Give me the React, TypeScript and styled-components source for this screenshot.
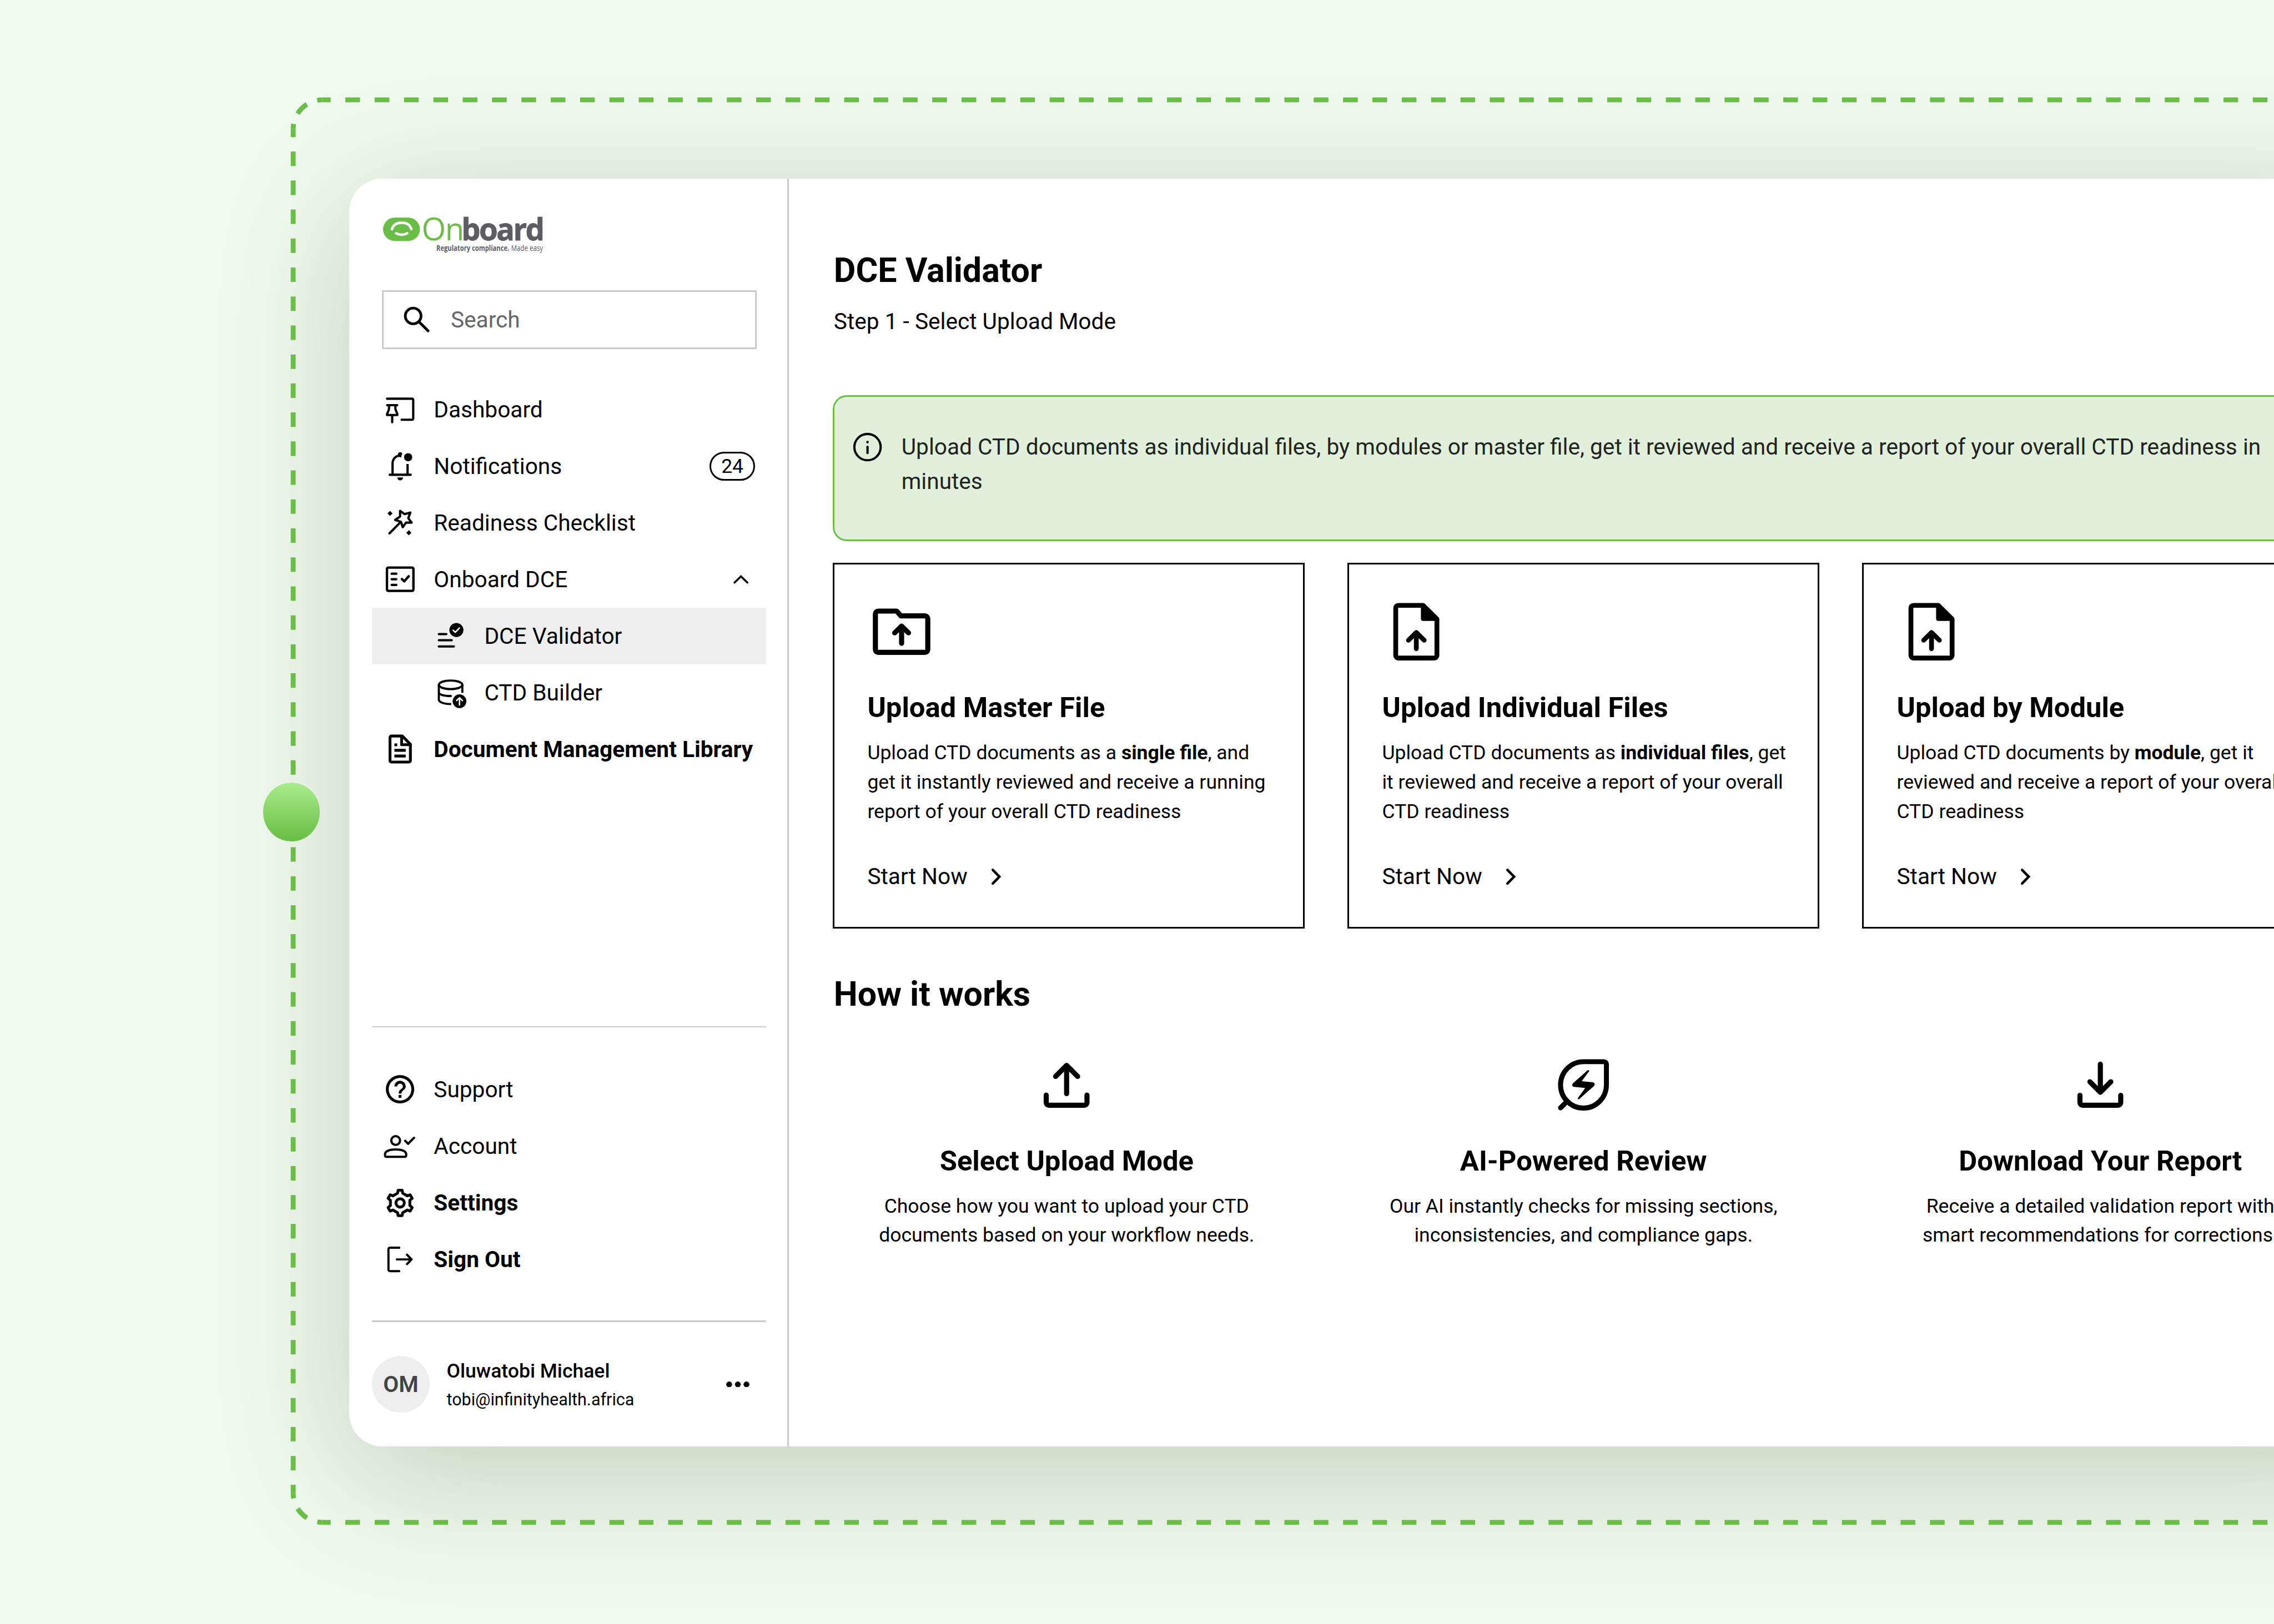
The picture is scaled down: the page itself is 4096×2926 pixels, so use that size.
import React from "react";
import styled, { createGlobalStyle } from "styled-components";
import { MdHelpOutline } from "react-icons/md";

const green = "#6abd46";
const line = "#cccccc";
const hair = "0.308rem";

/* 1rem is ten artboard units, so every length below scales from one place. */
const GlobalStyle = createGlobalStyle`
  html { font-size: 9.7524px; }
  body {
    margin: 0;
    overflow: hidden;
    background: #f0f9ee;
    font-family: Roboto, "Liberation Sans", sans-serif;
    color: #000;
  }
  *, *::before, *::after { box-sizing: border-box; }
  h1, h2, h3, p { margin: 0; }
  svg { display: block; flex: none; }
`;

const Page = styled.div`
  position: relative;
  width: 100vw;
  height: 100vh;
  overflow: hidden;
  display: flex;
  align-items: flex-start;
  padding: 33rem 0 0 64.5rem;
  background: #f0f9ee;
`;

const Outline = styled.svg`
  position: absolute;
  left: 0;
  top: 0;
  width: 420rem;
  height: 300rem;
  fill: none;
  stroke: ${green};
  stroke-width: 9;
`;

const Knob = styled.div`
  position: absolute;
  left: 48.57rem;
  top: 144.57rem;
  width: 10.53rem;
  height: 10.83rem;
  border-radius: 50%;
  background: linear-gradient(#a8ec8b, #69bd45);
`;

const Window = styled.div`
  flex: none;
  display: flex;
  width: 376.6rem;
  height: 234.2rem;
  border-radius: 6.1rem;
  background: #fff;
  box-shadow: 0 5.2rem 24rem rgba(31, 67, 5, 0.22);
`;

const Sidebar = styled.aside`
  flex: none;
  display: flex;
  flex-direction: column;
  width: 81.17rem;
  padding: 7.17rem 3.9rem 6.24rem 4.18rem;
  border-right: ${hair} solid ${line};
`;

const Logo = styled.svg`
  width: 30rem;
  height: 7rem;
  margin-left: 2.1rem;
  overflow: visible;
  font-family: "Open Sans", "Noto Sans", sans-serif;
`;

const SearchBox = styled.div`
  display: flex;
  align-items: center;
  gap: 3.14rem;
  width: 69.24rem;
  height: 10.87rem;
  margin: 6.43rem 0 5.98rem 1.88rem;
  padding-left: 2.98rem;
  border: ${hair} solid ${line};
  font-size: 4.167rem;
  color: #666;
`;

const List = styled.nav`
  display: flex;
  flex-direction: column;
`;

const Row = styled.a<{ $nested?: boolean; $active?: boolean; $strong?: boolean }>`
  display: flex;
  align-items: center;
  gap: ${(p) => (p.$nested ? "3.17rem" : "3.1rem")};
  height: 10.46rem;
  padding: 0 2rem 0 ${(p) => (p.$nested ? "11.34rem" : "2.06rem")};
  font-size: 4.167rem;
  font-weight: ${(p) => (p.$strong ? 700 : 400)};
  white-space: nowrap;
  background: ${(p) => (p.$active ? "#eeeeee" : "transparent")};
`;

const Count = styled.span`
  display: flex;
  align-items: center;
  justify-content: center;
  width: 8.4rem;
  height: 5.37rem;
  margin-left: auto;
  border: ${hair} solid #000;
  border-radius: 2.7rem;
  font-size: 3.645rem;
`;

const Caret = styled.svg`
  width: 2.8rem;
  height: 1.6rem;
  margin: 0 1.18rem 0 auto;
  overflow: visible;
`;

const Rule = styled.hr<{ $pinned?: boolean }>`
  width: 100%;
  height: 0.26rem;
  margin: ${(p) => (p.$pinned ? "auto" : "6.09rem")} 0 ${(p) => (p.$pinned ? "6.2rem" : "6.27rem")};
  border: 0;
  background: ${line};
`;

const Profile = styled.div`
  display: flex;
  align-items: center;
  height: 10.46rem;
  padding-right: 3rem;
`;

const Avatar = styled.div`
  display: flex;
  align-items: center;
  justify-content: center;
  width: 10.7rem;
  height: 10.46rem;
  margin-right: 3.12rem;
  border-radius: 50%;
  background: #eeeeee;
  color: #444;
  font-size: 4.167rem;
  font-weight: 600;
`;

const Person = styled.div`
  display: flex;
  flex-direction: column;
  padding-top: 0.5rem;
  line-height: 5.31rem;
`;

const Name = styled.span`
  font-size: 3.645rem;
  font-weight: 500;
`;

const Email = styled.span`
  font-size: 3.125rem;
`;

const Dots = styled.svg`
  width: 4.3rem;
  height: 1.1rem;
  margin-left: auto;
`;

const Main = styled.main`
  flex: none;
  width: 285.5rem;
  padding: 13.2rem 0 0 8.09rem;
`;

const Heading = styled.h1`
  padding-left: 0.24rem;
  font-size: 6.245rem;
  line-height: 7.5rem;
  font-weight: 700;
`;

const Step = styled.p`
  padding-left: 0.24rem;
  margin: 2.7rem 0 10.58rem;
  font-size: 4.167rem;
  line-height: 6rem;
`;

const Notice = styled.div`
  display: flex;
  align-items: flex-start;
  gap: 3.14rem;
  height: 26.98rem;
  margin-bottom: 3.97rem;
  padding: 6.2rem 3.1rem 0 3.02rem;
  border: ${hair} solid ${green};
  border-radius: 2.6rem;
  background: #e1f0da;
  color: #222;
  font-size: 4.165rem;
  line-height: 6.33rem;
  white-space: pre;
`;

const Line = styled.span`
  display: block;
  white-space: pre;
`;

const Cards = styled.div`
  display: flex;
  gap: 7.82rem;
  margin-bottom: 8.4rem;
`;

const Card = styled.section`
  flex: none;
  width: 87.24rem;
  height: 67.67rem;
  padding: 6.22rem 0 0 6.14rem;
  border: ${hair} solid #000;

  > svg { margin-left: -0.1rem; }
`;

const CardTitle = styled.h3`
  margin: 4.7rem 0 2.5rem;
  font-size: 5.205rem;
  line-height: 6.2rem;
  font-weight: 700;
`;

const Copy = styled.p`
  font-size: 3.645rem;
  line-height: 5.42rem;
  b { font-weight: 700; }
`;

const Start = styled.a`
  display: flex;
  align-items: center;
  gap: 4.45rem;
  margin-top: 6.3rem;
  font-size: 4.167rem;
  line-height: 6rem;
`;

const Arrow = styled.svg`
  width: 1.8rem;
  height: 3rem;
  overflow: visible;
`;

const Steps = styled.div`
  display: flex;
  gap: 8.96rem;
  margin-top: 6.76rem;
`;

const StepItem = styled.section`
  flex: none;
  display: flex;
  flex-direction: column;
  align-items: center;
  width: 86.5rem;
  text-align: center;

  h3 { margin: 4.6rem 0 2.5rem; }
`;

const Glyph = styled.svg<{ $size?: number; $weight?: number }>`
  width: ${(p) => p.$size ?? 6.276}rem;
  height: ${(p) => p.$size ?? 6.276}rem;
  overflow: visible;
  color: #000;
  fill: none;
  stroke: currentColor;
  stroke-width: ${(p) => p.$weight ?? 1.6};
  stroke-linecap: round;
  stroke-linejoin: round;
`;

const Solid = styled.g`
  fill: currentColor;
  stroke: none;
`;

const Cutout = styled.path`
  stroke: #fff;
  stroke-width: 1;
`;

type IconProps = { size?: number; weight?: number; children: React.ReactNode };
const Icon = ({ size, weight, children }: IconProps) => (
  <Glyph viewBox="0 0 24 24" $size={size} $weight={weight}>{children}</Glyph>
);

const BIG = 12.55;

const SearchIcon = () => (
  <Icon weight={1.9}>
    <circle cx="9.5" cy="9.5" r="5.55" />
    <path d="M13.8 13.8 20 20" />
  </Icon>
);

const BoardIcon = () => (
  <Icon>
    <path d="M2.8 4.45H20.5a.8.8 0 0 1 .8.8V18.5a.8.8 0 0 1-.8.8H13.1" />
    <path d="M2.9 9H10M4.2 9.2V11.3C4.2 13.2 2.8 14 2.8 16H10.1C10.1 14 8.7 13.2 8.7 11.3V9.2M6.45 16V21.1" />
  </Icon>
);

const BellIcon = () => (
  <Icon>
    <path d="M6.7 18V10.2C6.7 7.2 8.7 5 11.5 4.6M17.3 18V10.6" strokeLinecap="butt" />
    <path d="M4.7 18.2H19.5" />
    <Solid>
      <path d="M10.5 3.6a1.6 1.6 0 0 1 3.1-.2c-.5.8-.8 1.6-.7 2.6L10.4 5.4z" />
      <circle cx="17.7" cy="5.8" r="2.9" />
      <path d="M10 20.1h4.1a2.05 2.1 0 0 1-4.1 0z" />
    </Solid>
  </Icon>
);

const WandIcon = () => (
  <Icon>
    <path d="M12 3.7 15.2 6 19.3 4.9 17.8 8.8 20.2 12 16.2 12 13.9 15.2 12.6 11.4 8.5 10.1 12 7.7z" />
    <path d="M12.4 11.6 4.5 19.6" />
    <Solid>
      <path d="M4.9 3.7 6.7 5.5 4.9 7.3 3.1 5.5zM18.2 17.4 20 19.2 18.2 21 16.4 19.2z" />
    </Solid>
  </Icon>
);

const ChecklistIcon = () => (
  <Icon weight={1.7}>
    <rect x="2.75" y="3.75" width="18.7" height="16.5" rx="1" />
    <path d="M6.1 8.1H9.3M6.1 12H9.3M6.1 16H9.3M13.3 11.9 15 13.5 18.1 9.9" />
  </Icon>
);

const ValidatorIcon = () => (
  <Icon>
    <Solid><circle cx="16.5" cy="7.9" r="4.95" /></Solid>
    <Cutout d="M14.2 8.1 15.7 9.5 18.6 6.5" />
    <path d="M4.1 10.8H9.4M4.1 15.1H13.2M4.1 19.5H14.7" />
  </Icon>
);

const DatabaseIcon = () => (
  <Icon weight={1.5}>
    <ellipse cx="12.4" cy="6.6" rx="8.3" ry="3.05" />
    <path d="M4.1 6.6V17.2C4.1 18.8 7.6 20.2 12.8 20.2M4.1 12C4.1 13.5 7.6 14.6 13.2 14.5M20.7 6.6V12.3" strokeLinecap="butt" />
    <Solid><circle cx="18.7" cy="18.2" r="4.85" /></Solid>
    <Cutout d="M18.7 20.9V15.8M16.6 17.8 18.7 15.7 20.8 17.8" />
  </Icon>
);

const DocumentIcon = () => (
  <Icon weight={2}>
    <path d="M5.9 2.8H13.6L19.3 8.6V20.2a1 1 0 0 1-1 1H5.9a1 1 0 0 1-1-1V3.8a1 1 0 0 1 1-1z" />
    <path d="M13.1 3V8.9H19M8 9H10M8 12.9H16M8 16.9H16" strokeLinecap="butt" />
  </Icon>
);

const AccountIcon = () => (
  <Icon>
    <circle cx="8.9" cy="8.2" r="3.1" />
    <path d="M1.4 17.8C1.4 15.6 4.8 14.5 8.9 14.5S16.3 15.6 16.3 17.8V18.9a.8.8 0 0 1-.8.8H2.2a.8.8 0 0 1-.8-.8zM15.6 8.4 17.7 10.5 21.9 6.3" />
  </Icon>
);

/* Six-toothed gear: each tooth has two tip corners and two base corners. */
const gear = [0, 60, 120, 180, 240, 300]
  .flatMap((a) => [[7.1, a - 15], [9.1, a - 9], [9.1, a + 9], [7.1, a + 15]])
  .map(([r, a]) => {
    const t = (a * Math.PI) / 180;
    return `${(12.05 + r * Math.sin(t)).toFixed(2)},${(12.3 - r * Math.cos(t)).toFixed(2)}`;
  })
  .join(" ");

const SettingsIcon = () => (
  <Icon weight={2}>
    <polygon points={gear} />
    <circle cx="12.05" cy="12.3" r="2.95" />
  </Icon>
);

const SignOutIcon = () => (
  <Icon weight={1.55}>
    <path d="M11.4 3.9H4.9a1.1 1.1 0 0 0-1.1 1.1V19.4a1.1 1.1 0 0 0 1.1 1.1H11.4M9.7 12.2H20M16.9 8.9 20.1 12.2 16.9 15.5" />
  </Icon>
);

const InfoIcon = () => (
  <Icon weight={1.6}>
    <circle cx="12" cy="12" r="9.3" />
    <path d="M12 11.8V16.2" />
    <Solid><circle cx="12" cy="8.4" r=".9" /></Solid>
  </Icon>
);

const FolderIcon = () => (
  <Icon size={BIG} weight={1.8}>
    <path d="M4.1 4.7H10.6L12.1 6.4H20.6a1 1 0 0 1 1 1V18.3a1 1 0 0 1-1 1H4.1a1 1 0 0 1-1-1V5.7a1 1 0 0 1 1-1zM12.35 16.1V10.2M9.9 12.4 12.35 10 14.8 12.4" />
  </Icon>
);

const FileUpIcon = () => (
  <Icon size={BIG} weight={1.7}>
    <path d="M6 2.7H14.8L19.65 7.5V20.4a.9.9 0 0 1-.9.9H6a.9.9 0 0 1-.9-.9V3.6a.9.9 0 0 1 .9-.9zM12.37 18V12.5M9.6 15 12.37 12.3 15.15 15" />
    <Solid><path d="M14 2.7V7.4a.8.8 0 0 0 .8.8H19.8L15 2.7z" /></Solid>
  </Icon>
);

const UploadIcon = () => (
  <Icon size={BIG} weight={1.8}>
    <path d="M4.8 15.5V18.1a1 1 0 0 0 1 1H18.2a1 1 0 0 0 1-1V15.5M12 15V5.4M8.1 8.9 12 5 15.9 8.9" />
  </Icon>
);

const LeafIcon = () => (
  <Icon size={BIG} weight={1.75}>
    <path d="M12 3.7H19.2a.9.9 0 0 1 .9.9V11.9A8.1 8.2 0 1 1 12 3.7zM5.9 18 3.9 20" />
    <Solid>
      <path d="M14.1 6.9 11.4 10.6 15.3 11c.7.1.9.8.4 1.3L10.4 17 9.9 16.7 12.6 13 8.7 12.6c-.7-.1-.9-.8-.4-1.3L13.6 6.6z" />
    </Solid>
  </Icon>
);

const DownloadIcon = () => (
  <Icon size={BIG} weight={1.8}>
    <path d="M4.8 15.6V18.1a1 1 0 0 0 1 1H18.2a1 1 0 0 0 1-1V15.6M12 4.6V14.3M8.3 10.8 12 14.5 15.7 10.8" />
  </Icon>
);

const Brand = () => (
  <Logo viewBox="0 0 300 70">
    <rect x="0" y="0" width="68" height="43.2" rx="21.6" fill={green} />
    <g fill="none" stroke="#fff" strokeWidth="4.6" strokeLinecap="round">
      <path d="M16.2 21.5C19 13 26 9.6 34.3 9.6S49.6 13 52.4 21.5" />
      <path d="M24 29C30.2 32.6 38.4 32.6 44.6 29" />
    </g>
    <text x="71.2" y="42.4" fontSize="57.5" fontWeight="500" fill={green} letterSpacing="-1.4">On</text>
    <text x="144.6" y="42.4" fontSize="56" fontWeight="700" fill="#5c5c65" stroke="#5c5c65" strokeWidth=".8" letterSpacing="-2.7">board</text>
    <text x="98.5" y="61.3" fontSize="14.5" fontWeight="700" fill="#5c5c65" textLength="134.5" lengthAdjust="spacingAndGlyphs">Regulatory compliance.</text>
    <text x="236.5" y="61.3" fontSize="14.5" fill="#5c5c65" textLength="59" lengthAdjust="spacingAndGlyphs">Made easy</text>
  </Logo>
);

const cards = [
  {
    icon: <FolderIcon />,
    title: "Upload Master File",
    lines: [
      <>Upload CTD documents as a <b>single file</b>, and</>,
      "get it instantly reviewed and receive a running",
      "report of your overall CTD readiness",
    ],
  },
  {
    icon: <FileUpIcon />,
    title: "Upload Individual Files",
    lines: [
      <>Upload CTD documents as <b>individual files</b>, get</>,
      "it reviewed and receive a report of your overall",
      "CTD readiness",
    ],
  },
  {
    icon: <FileUpIcon />,
    title: "Upload by Module",
    lines: [
      <>Upload CTD documents by <b>module</b>, get it</>,
      "reviewed and receive a report of your overall",
      "CTD readiness",
    ],
  },
];

const steps = [
  {
    icon: <UploadIcon />,
    title: "Select Upload Mode",
    lines: ["Choose how you want to upload your CTD", "documents based on your workflow needs."],
  },
  {
    icon: <LeafIcon />,
    title: "AI-Powered Review",
    lines: ["Our AI instantly checks for missing sections,", "inconsistencies, and compliance gaps."],
  },
  {
    icon: <DownloadIcon />,
    title: "Download Your Report",
    lines: ["Receive a detailed validation report with", "smart recommendations for corrections."],
  },
];

const Lines = ({ lines }: { lines: React.ReactNode[] }) => (
  <Copy>
    {lines.map((text, i) => <Line key={i}>{text}</Line>)}
  </Copy>
);

export default function App() {
  return (
    <>
      <GlobalStyle />
      <Page>
        <Window>
          <Sidebar>
            <Brand />
            <SearchBox><SearchIcon />Search</SearchBox>
            <List>
              <Row><BoardIcon />Dashboard</Row>
              <Row><BellIcon />Notifications<Count>24</Count></Row>
              <Row><WandIcon />Readiness Checklist</Row>
              <Row>
                <ChecklistIcon />Onboard DCE
                <Caret viewBox="0 0 28 16" fill="none" stroke="#000" strokeWidth="3.6" strokeLinecap="round">
                  <path d="M2 14 14 2.5 26 14" />
                </Caret>
              </Row>
              <Row $nested $active><ValidatorIcon />DCE Validator</Row>
              <Row $nested><DatabaseIcon />CTD Builder</Row>
              <Row $strong><DocumentIcon />Document Management Library</Row>
            </List>
            <Rule $pinned />
            <List>
              <Row><MdHelpOutline size="6.276rem" />Support</Row>
              <Row><AccountIcon />Account</Row>
              <Row $strong><SettingsIcon />Settings</Row>
              <Row $strong><SignOutIcon />Sign Out</Row>
            </List>
            <Rule />
            <Profile>
              <Avatar>OM</Avatar>
              <Person>
                <Name>Oluwatobi Michael</Name>
                <Email>tobi@infinityhealth.africa</Email>
              </Person>
              <Dots viewBox="0 0 43 11">
                <circle cx="5.5" cy="5.5" r="5.4" />
                <circle cx="21.5" cy="5.5" r="5.4" />
                <circle cx="37.5" cy="5.5" r="5.4" />
              </Dots>
            </Profile>
          </Sidebar>
          <Main>
            <Heading>DCE Validator</Heading>
            <Step>Step 1 - Select Upload Mode</Step>
            <Notice>
              <InfoIcon />
              <p>
                <Line>Upload CTD documents as individual files, by modules or master file, get it reviewed and receive a report of your overall CTD readiness in</Line>
                <Line>minutes</Line>
              </p>
            </Notice>
            <Cards>
              {cards.map((card) => (
                <Card key={card.title}>
                  {card.icon}
                  <CardTitle>{card.title}</CardTitle>
                  <Lines lines={card.lines} />
                  <Start>
                    Start Now
                    <Arrow viewBox="0 0 18 30" fill="none" stroke="#000" strokeWidth="4.6" strokeLinecap="round">
                      <path d="M2.3 2.5 14.6 15 2.3 27.5" />
                    </Arrow>
                  </Start>
                </Card>
              ))}
            </Cards>
            <Heading as="h2">How it works</Heading>
            <Steps>
              {steps.map((step) => (
                <StepItem key={step.title}>
                  {step.icon}
                  <CardTitle>{step.title}</CardTitle>
                  <Lines lines={step.lines} />
                </StepItem>
              ))}
            </Steps>
          </Main>
        </Window>
        <Outline viewBox="0 0 4200 3000">
          <path d="M595.5 184.5H4210" strokeDasharray="27.1 27.1" strokeDashoffset="11.9" />
          <path d="M595.5 184.5A54 54 0 0 0 541.5 238.5" strokeDasharray="9.7 20.5 24.4 20.5 9.7 99" />
          <path d="M541.5 238.5V2758.5" strokeDasharray="26.75 26.8" strokeDashoffset="12.05" />
          <path d="M541.5 2758.5A54 54 0 0 0 595.5 2812.5" strokeDasharray="9.7 20.5 24.4 20.5 9.7 99" />
          <path d="M595.5 2812.5H4210" strokeDasharray="27.1 27.1" strokeDashoffset="11.9" />
        </Outline>
        <Knob />
      </Page>
    </>
  );
}
